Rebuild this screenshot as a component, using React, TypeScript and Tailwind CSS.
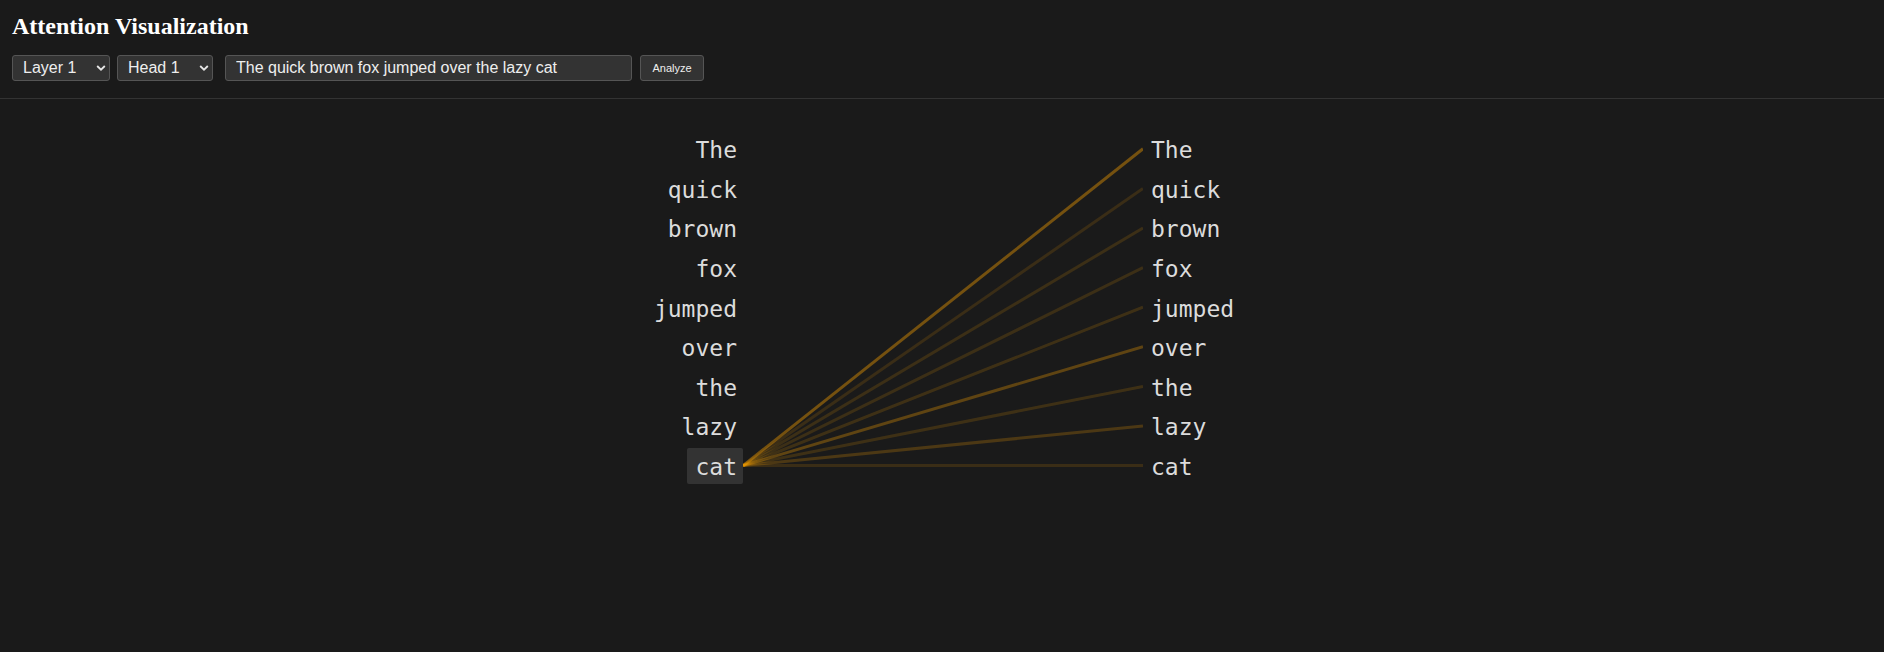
import { useState } from "react";

const WORDS = ["The", "quick", "brown", "fox", "jumped", "over", "the", "lazy", "cat"];

// attention from the selected token ("cat") to every token
const WEIGHTS = [0.4, 0.14, 0.15, 0.15, 0.16, 0.3, 0.16, 0.22, 0.14];

const ROW_H = 35.6;
const GAP = 4;
const STEP = ROW_H + GAP;
const SVG_W = 400;

function Chevron() {
  return (
    <svg
      className="pointer-events-none absolute right-[4px] top-1/2 -translate-y-1/2"
      width="10"
      height="7"
      viewBox="0 0 10 7"
      fill="none"
    >
      <polyline points="1.2,1.5 5,5.2 8.8,1.5" stroke="#e6e6e6" strokeWidth="1.8" />
    </svg>
  );
}

function Select({
  value,
  onChange,
  options,
  width,
}: {
  value: string;
  onChange: (v: string) => void;
  options: string[];
  width: string;
}) {
  return (
    <div className={`relative ${width}`}>
      <select
        value={value}
        onChange={(e) => onChange(e.target.value)}
        className="h-[26px] w-full appearance-none rounded-[3px] border border-[#555] bg-[#333] pl-[10px] pr-5 text-base leading-[24px] text-[#eee] outline-none"
      >
        {options.map((o) => (
          <option key={o} value={o}>
            {o}
          </option>
        ))}
      </select>
      <Chevron />
    </div>
  );
}

export default function App() {
  const [layer, setLayer] = useState("Layer 1");
  const [head, setHead] = useState("Head 1");
  const [text, setText] = useState("The quick brown fox jumped over the lazy cat");
  const selected = WORDS.length - 1;

  const height = WORDS.length * ROW_H + (WORDS.length - 1) * GAP;
  const cy = (i: number) => ROW_H / 2 + i * STEP;

  return (
    <div className="min-h-screen bg-[#1a1a1a] text-white font-['Liberation_Sans',Arial,sans-serif]">
      <header className="border-b border-[#333] px-3 pt-[13px] pb-[16.5px]">
        <h2 className="font-['Liberation_Serif','Times_New_Roman',serif] text-2xl font-bold leading-[27.6px] text-white">
          Attention Visualization
        </h2>
        <div className="mt-[14.7px] flex items-center">
          <Select
            value={layer}
            onChange={setLayer}
            options={["Layer 1", "Layer 2", "Layer 3", "Layer 4"]}
            width="w-[98px]"
          />
          <div className="ml-[7px]">
            <Select
              value={head}
              onChange={setHead}
              options={["Head 1", "Head 2", "Head 3", "Head 4"]}
              width="w-[96px]"
            />
          </div>
          <input
            value={text}
            onChange={(e) => setText(e.target.value)}
            className="ml-[12px] h-[26px] w-[407px] rounded-[3px] border border-[#555] bg-[#333] px-[10px] text-base text-[#eee] outline-none"
          />
          <button className="ml-[8px] h-[26px] w-[64px] rounded-[3px] border border-[#555] bg-[#333] text-[11px] text-[#eee]">
            Analyze
          </button>
        </div>
      </header>

      <main className="flex justify-center pl-[4px] pt-[32.5px] font-['DejaVu_Sans_Mono',monospace] text-[23px] text-[#dcdcdc]">
        <div className="flex flex-col items-end gap-1">
          {WORDS.map((w, i) => (
            <div
              key={i}
              className={`h-[35.6px] pl-2 pr-[6px] pt-[6px] pb-[2px] leading-[27.6px] ${
                i === selected ? "rounded-[2px] bg-[#333]" : ""
              }`}
            >
              {w}
            </div>
          ))}
        </div>

        <svg width={SVG_W} height={height} className="shrink-0">
          {WORDS.map((_, j) => (
            <line
              key={j}
              x1={0}
              y1={cy(selected)}
              x2={SVG_W}
              y2={cy(j)}
              stroke="#ffa500"
              strokeOpacity={WEIGHTS[j]}
              strokeWidth={3}
            />
          ))}
        </svg>

        <div className="flex flex-col items-start gap-1">
          {WORDS.map((w, i) => (
            <div key={i} className="h-[35.6px] px-2 pt-[6px] pb-[2px] leading-[27.6px]">
              {w}
            </div>
          ))}
        </div>
      </main>
    </div>
  );
}
